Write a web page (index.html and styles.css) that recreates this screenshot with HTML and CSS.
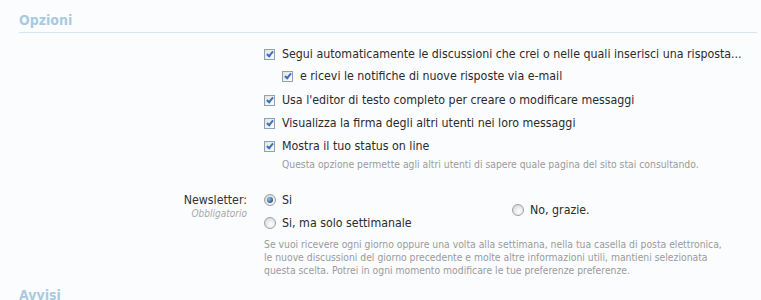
FILE: index.html
```html
<!DOCTYPE html>
<html lang="it">
<head>
    <meta charset="UTF-8">
    <title>Opzioni</title>
    <link rel="stylesheet" href="styles.css">
</head>
<body>
    <div class="prefs">
        <h3 class="section-title">Opzioni</h3>

        <dl class="ctrl-unit">
            <dt></dt>
            <dd>
                <ul class="check-list">
                    <li class="has-sub">
                        <label class="check"><span class="box checked"></span>Segui automaticamente le discussioni che crei o nelle quali inserisci una risposta...</label>
                        <ul class="check-list sub">
                            <li><label class="check"><span class="box checked"></span>e ricevi le notifiche di nuove risposte via e-mail</label></li>
                        </ul>
                    </li>
                    <li><label class="check"><span class="box checked"></span>Usa l'editor di testo completo per creare o modificare messaggi</label></li>
                    <li><label class="check"><span class="box checked"></span>Visualizza la firma degli altri utenti nei loro messaggi</label></li>
                    <li>
                        <label class="check"><span class="box checked"></span>Mostra il tuo status on line</label>
                        <p class="hint">Questa opzione permette agli altri utenti di sapere quale pagina del sito stai consultando.</p>
                    </li>
                </ul>
            </dd>
        </dl>

        <dl class="ctrl-unit newsletter">
            <dt>
                <label>Newsletter:</label>
                <dfn>Obbligatorio</dfn>
            </dt>
            <dd>
                <ul class="radio-list">
                    <li><label class="check"><span class="radio on"></span>Si</label></li>
                    <li class="no"><label class="check"><span class="radio"></span>No, grazie.</label></li>
                    <li><label class="check"><span class="radio"></span>Si, ma solo settimanale</label></li>
                </ul>
                <p class="explain">Se vuoi ricevere ogni giorno oppure una volta alla settimana, nella tua casella di posta elettronica, le nuove discussioni del giorno precedente e molte altre informazioni utili, mantieni selezionata questa scelta. Potrei in ogni momento modificare le tue preferenze preferenze.</p>
            </dd>
        </dl>

        <h3 class="section-title next">Avvisi</h3>
    </div>
</body>
</html>
```

FILE: styles.css
```css
:root {
    --title-color: #a9cbe0;
    --rule-color: #d5e6f0;
    --text-color: #2b2b2b;
    --muted-color: #9a9a9a;
    --bg-color: #fbfcfe;
}

body {
    margin: 0;
    background-color: var(--bg-color);
    font-family: 'DejaVu Sans Condensed', 'DejaVu Sans', Tahoma, sans-serif;
    font-size: 12.3px;
    color: var(--text-color);
}

.prefs {
    padding: 11px 4px 0 19px;
}

.section-title {
    margin: 0;
    padding-bottom: 3px;
    line-height: 18px;
    font-size: 14px;
    font-weight: bold;
    color: var(--title-color);
    border-bottom: 1px solid var(--rule-color);
}

.section-title.next {
    margin-top: 9px;
    border-bottom: none;
}

.ctrl-unit {
    display: flex;
    margin: 12px 0 0;
}

.ctrl-unit dt {
    width: 228px;
    flex-shrink: 0;
    text-align: right;
}

.ctrl-unit dd {
    margin: 0 0 0 17px;
    flex: 1;
}

.check-list,
.radio-list {
    list-style: none;
    margin: 0;
    padding: 0;
}

.check-list li {
    margin-bottom: 5px;
}

.check-list li.has-sub {
    margin-bottom: 6px;
}

.check-list li:last-child {
    margin-bottom: 0;
}

.check-list.sub {
    margin: 4px 0 0 18px;
}

.check {
    display: flex;
    align-items: center;
    line-height: 18px;
    white-space: nowrap;
}

.box {
    width: 11px;
    height: 11px;
    margin-right: 7px;
    box-sizing: border-box;
    border: 1px solid #8ea2b6;
    background: linear-gradient(135deg, #e4e4e0, #fbfbf9);
    position: relative;
    flex-shrink: 0;
}

.box.checked::after {
    content: "";
    position: absolute;
    left: 3px;
    top: 0px;
    width: 2px;
    height: 5px;
    border: solid #3f6fbf;
    border-width: 0 2px 2px 0;
    transform: rotate(40deg);
}

.hint {
    margin: 2px 0 0 18px;
    line-height: 14px;
    font-size: 10.3px;
    color: var(--muted-color);
}

.newsletter {
    margin-top: 20px;
}

.newsletter dt label {
    display: block;
    line-height: 18px;
    color: #333;
}

.newsletter dfn {
    display: block;
    margin-top: -1px;
    line-height: 12px;
    font-size: 10px;
    color: #a8a8a8;
}

.radio-list {
    display: grid;
    grid-template-columns: 248px auto;
    row-gap: 5px;
}

.radio-list .no {
    grid-column: 2;
    grid-row: 1 / span 2;
    align-self: center;
    margin-bottom: 4px;
}

.radio {
    width: 12px;
    height: 12px;
    margin-right: 6px;
    border-radius: 50%;
    box-sizing: border-box;
    border: 1px solid #a0a0a0;
    background: radial-gradient(circle at 60% 65%, #ffffff 0, #e6e6e6 55%, #cfcfcf 100%);
    position: relative;
    flex-shrink: 0;
}

.radio.on::after {
    content: "";
    position: absolute;
    left: 2px;
    top: 2px;
    width: 6px;
    height: 6px;
    border-radius: 50%;
    background: radial-gradient(circle at 35% 35%, #8fc0e8, #2a5d92 70%);
}

.explain {
    margin: 6px 0 0;
    line-height: 13px;
    font-size: 10.3px;
    color: var(--muted-color);
    max-width: 462px;
}
```
